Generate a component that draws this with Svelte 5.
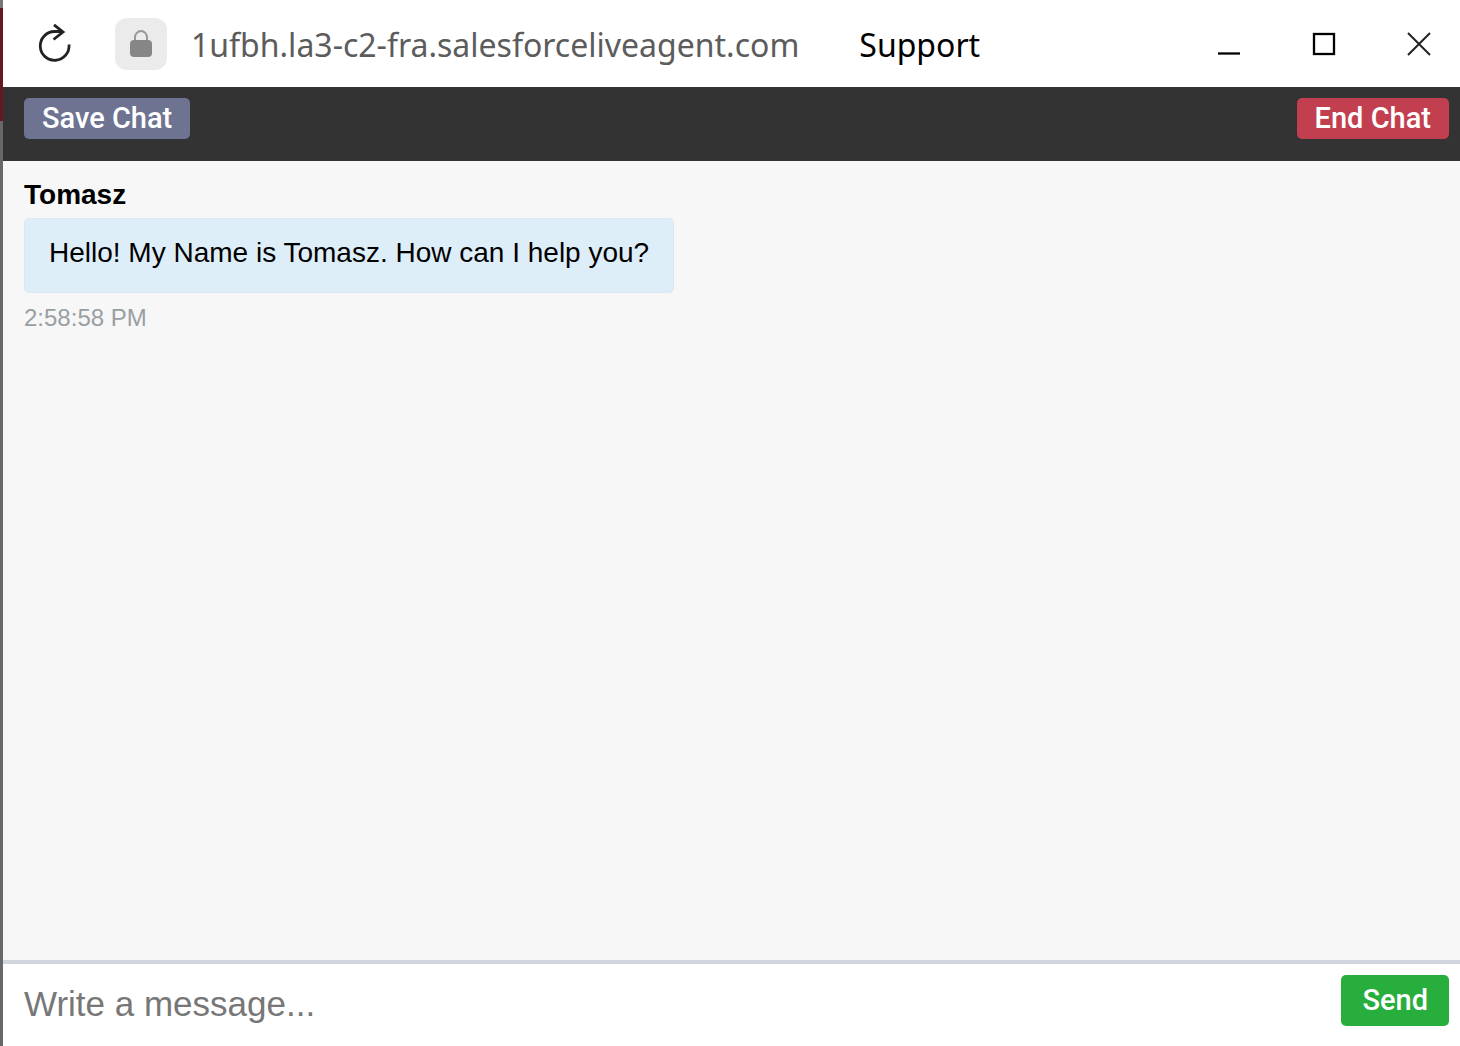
<script>
  let message = $state('');
  const messages = [
    { author: 'Tomasz', text: 'Hello! My Name is Tomasz. How can I help you?', time: '2:58:58 PM' }
  ];
</script>

<div class="window">
  <header class="titlebar">
    <button class="icon-button" aria-label="Reload">
      <svg width="36" height="40" viewBox="0 0 36 40" fill="none" stroke="#222" stroke-width="2.8">
        <path d="M32 20.5A14.4 14.4 0 1 1 17.5 7.5L26 7.5" />
        <path d="M17 0.8L26 8L16.5 15.5" />
      </svg>
    </button>
    <button class="lock" aria-label="Site information">
      <svg width="24" height="30" viewBox="0 0 24 30">
        <path d="M6 13V8.5a6 6.5 0 0 1 12 0V13" fill="none" stroke="#999" stroke-width="2" />
        <rect x="1" y="11" width="22" height="17" rx="4" fill="#868686" />
      </svg>
    </button>
    <div class="address">
      <span class="host">1ufbh.la3-c2-fra.salesforceliveagent.com</span>
      <h1>Support</h1>
    </div>
    <div class="controls">
      <button class="icon-button" aria-label="Minimize">
        <svg width="24" height="24" viewBox="0 0 24 24"><path d="M1 21.5H23" stroke="#000" stroke-width="2.3" /></svg>
      </button>
      <button class="icon-button" aria-label="Maximize">
        <svg width="24" height="24" viewBox="0 0 24 24"><rect x="2" y="2" width="20" height="20" fill="none" stroke="#000" stroke-width="2.3" /></svg>
      </button>
      <button class="icon-button" aria-label="Close">
        <svg width="24" height="24" viewBox="0 0 24 24"><path d="M1 1L23 23M23 1L1 23" stroke="#222" stroke-width="2" /></svg>
      </button>
    </div>
  </header>

  <nav class="toolbar">
    <button class="button">Save Chat</button>
    <button class="button end">End Chat</button>
  </nav>

  <main>
    {#each messages as item}
      <article>
        <h2>{item.author}</h2>
        <p class="bubble">{item.text}</p>
        <time>{item.time}</time>
      </article>
    {/each}
  </main>

  <form class="composer" onsubmit={(event) => event.preventDefault()}>
    <input type="text" aria-label="Message" placeholder="Write a message..." bind:value={message} />
    <button class="button send">Send</button>
  </form>
</div>

<style>
  :global(body) {
    margin: 0;
  }
  .window {
    box-sizing: border-box;
    display: flex;
    flex-direction: column;
    min-height: 100vh;
    border-left: 3px solid;
    border-image: linear-gradient(#777 0 9px, #641820 9px 122px, #686868 122px) 1;
    background: #fff;
    font-family: 'Liberation Sans', Arial, sans-serif;
    color: #000;
  }
  button {
    border: 0;
    padding: 0;
    font: inherit;
    cursor: pointer;
  }
  svg {
    display: block;
  }
  .icon-button {
    background: none;
  }
  .titlebar {
    display: flex;
    align-items: center;
    height: 87px;
    padding: 0 29px 0 34px;
    font-family: 'Noto Sans', 'Open Sans', sans-serif;
    font-size: 32px;
  }
  .lock {
    display: grid;
    place-items: center;
    width: 52px;
    height: 52px;
    margin: 0 24px 0 42px;
    border-radius: 12px;
    background: #ebebeb;
  }
  .address {
    display: flex;
    gap: 60px;
    padding-top: 2px;
  }
  .host {
    color: #5c5c5c;
  }
  h1 {
    margin: 0;
    font-size: inherit;
    font-weight: 400;
  }
  .controls {
    display: flex;
    gap: 71px;
    margin-left: auto;
  }
  .toolbar {
    display: flex;
    align-items: flex-start;
    justify-content: space-between;
    box-sizing: border-box;
    height: 74px;
    padding: 11px 11px 0 21px;
    background: #333;
  }
  .button {
    padding: 0 18px;
    border-radius: 5px;
    background: #6e7391;
    font-family: Roboto, sans-serif;
    font-size: 29px;
    font-weight: 500;
    line-height: 41px;
    color: #fff;
  }
  .end {
    background: #c23f50;
  }
  main {
    flex: 1;
    padding: 16px 21px;
    background: #f7f7f7;
  }
  article {
    display: flex;
    flex-direction: column;
    align-items: flex-start;
  }
  h2 {
    margin: 0 0 5px;
    font-size: 28px;
    line-height: 36px;
  }
  .bubble {
    margin: 0 0 10px;
    padding: 16px 24px 21px;
    border: 1px solid #dce8ef;
    border-radius: 5px;
    background: #deeef8;
    font-size: 28px;
    line-height: 36px;
  }
  time {
    font-size: 24px;
    line-height: 30px;
    color: #999fa3;
  }
  .composer {
    display: flex;
    align-items: flex-start;
    gap: 20px;
    box-sizing: border-box;
    height: 86px;
    padding: 11px 11px 0 21px;
    border-top: 4px solid #d0d5de;
  }
  input {
    flex: 1;
    min-width: 0;
    height: 58px;
    padding: 0;
    border: 0;
    outline: 0;
    background: none;
    font: inherit;
    font-size: 35px;
  }
  input::placeholder {
    color: #777;
    opacity: 1;
  }
  .send {
    padding: 0 21px;
    background: #27ae3c;
    line-height: 51px;
  }
</style>
